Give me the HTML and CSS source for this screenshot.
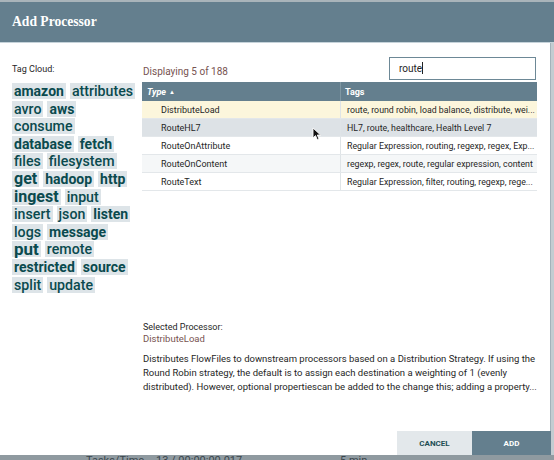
FILE: index.html
```html
<!DOCTYPE html>
<html>
<head>
<meta charset="utf-8">
<link rel="stylesheet" href="styles.css">
</head>
<body>
<div class="top-strip"></div>
<div class="dialog">
  <div class="dialog-header">Add Processor</div>
  <div class="dialog-body">
    <div class="tag-panel">
      <div class="tag-label">Tag Cloud:</div>
      <div class="tag-cloud">
        <div class="tag-row"><span class="tag s14">amazon</span><span class="tag s13">attributes</span></div>
        <div class="tag-row"><span class="tag s13">avro</span><span class="tag s14">aws</span></div>
        <div class="tag-row"><span class="tag s13">consume</span></div>
        <div class="tag-row"><span class="tag s14">database</span><span class="tag s14">fetch</span></div>
        <div class="tag-row"><span class="tag s13">files</span><span class="tag s13">filesystem</span></div>
        <div class="tag-row"><span class="tag s16">get</span><span class="tag s14">hadoop</span><span class="tag s14">http</span></div>
        <div class="tag-row"><span class="tag s16">ingest</span><span class="tag s13">input</span></div>
        <div class="tag-row"><span class="tag s13">insert</span><span class="tag s13">json</span><span class="tag s14">listen</span></div>
        <div class="tag-row"><span class="tag s13">logs</span><span class="tag s14">message</span></div>
        <div class="tag-row"><span class="tag s17">put</span><span class="tag s13">remote</span></div>
        <div class="tag-row"><span class="tag s14">restricted</span><span class="tag s14">source</span></div>
        <div class="tag-row"><span class="tag s13">split</span><span class="tag s13">update</span></div>
      </div>
    </div>
    <div class="main-panel">
      <div class="toolbar">
        <div class="count">Displaying 5 of 188</div>
        <div class="search">route<span class="caret"></span></div>
      </div>
      <div class="table">
        <div class="row head">
          <div class="cell c-type">Type <span class="sort">&#9650;</span></div>
          <div class="cell c-tags">Tags</div>
        </div>
        <div class="row selected">
          <div class="cell c-type">DistributeLoad</div>
          <div class="cell c-tags">route, round robin, load balance, distribute, wei...</div>
        </div>
        <div class="row hover">
          <div class="cell c-type">RouteHL7</div>
          <div class="cell c-tags">HL7, route, healthcare, Health Level 7</div>
        </div>
        <div class="row">
          <div class="cell c-type">RouteOnAttribute</div>
          <div class="cell c-tags">Regular Expression, routing, regexp, regex, Exp...</div>
        </div>
        <div class="row alt">
          <div class="cell c-type">RouteOnContent</div>
          <div class="cell c-tags">regexp, regex, route, regular expression, content</div>
        </div>
        <div class="row">
          <div class="cell c-type">RouteText</div>
          <div class="cell c-tags">Regular Expression, filter, routing, regexp, rege...</div>
        </div>
        <svg class="cursor" width="10" height="14" viewBox="0 0 10 14"><path d="M1 1 L1 11 L3.5 8.6 L5.3 12.8 L7 12 L5.3 8 L8.6 8 Z" fill="#111" stroke="#fff" stroke-width="0.9"/></svg>
      </div>
      <div class="selected-info">
        <div class="sel-label">Selected Processor:</div>
        <div class="sel-name">DistributeLoad</div>
        <div class="sel-desc">Distributes FlowFiles to downstream processors based on a Distribution Strategy. If using the Round Robin strategy, the default is to assign each destination a weighting of 1 (evenly distributed). However, optional propertiescan be added to the change this; adding a property...</div>
      </div>
    </div>
  </div>
  <div class="dialog-footer">
    <div class="btn cancel">CANCEL</div>
    <div class="btn add">ADD</div>
  </div>
</div>
<div class="canvas-strip">
  <span class="st1">Tasks/Time</span><span class="st2">13 / 00:00:00.017</span><span class="st3">5 min</span>
</div>
</body>
</html>
```
FILE: styles.css
```css
html, body {
  margin: 0;
  padding: 0;
}
body {
  width: 554px;
  height: 460px;
  overflow: hidden;
  background: #c3ccd1;
  font-family: Roboto, "Liberation Sans", sans-serif;
}
.top-strip {
  height: 2px;
  background: #a9b4ba;
}
.dialog {
  width: 554px;
  display: flex;
  flex-direction: column;
}
.dialog-header {
  height: 40px;
  background: #647f8e;
  color: #fff;
  font-family: "Liberation Serif", serif;
  font-weight: bold;
  font-size: 13.6px;
  line-height: 40px;
  padding-left: 12px;
  border-bottom: 1px solid #c6d3da;
}
.dialog-body {
  width: 550px;
  height: 388px;
  background: #fff;
  border-right: 1px solid #a3b2ba;
  display: flex;
}
.tag-panel {
  width: 128px;
  padding: 20px 0 0 12px;
}
.tag-label {
  font-size: 9px;
  color: #262626;
  line-height: 12px;
}
.tag-cloud {
  margin-top: 8px;
  display: flex;
  flex-direction: column;
  row-gap: 1.6px;
}
.tag-row {
  display: flex;
  column-gap: 4px;
}
.tag {
  background: #dde4e8;
  color: #0a4a4e;
  font-weight: bold;
  height: 16px;
  line-height: 16px;
  padding: 0 2px;
  display: flex;
  align-items: center;
  white-space: nowrap;
}
.s13 { font-size: 14.2px; font-weight: 500; }
.s14 { font-size: 14px; }
.s16 { font-size: 16px; }
.s17 { font-size: 17px; }
.main-panel {
  width: 395px;
  margin-left: 2px;
  display: flex;
  flex-direction: column;
}
.toolbar {
  display: flex;
  justify-content: space-between;
  align-items: flex-end;
  padding-top: 14px;
}
.count {
  font-size: 10px;
  color: #775351;
  padding-left: 1px;
  padding-bottom: 3px;
}
.search {
  width: 136px;
  height: 21px;
  border: 1px solid #6d8896;
  font-size: 10px;
  line-height: 21px;
  padding-left: 9px;
  color: #262626;
  margin-right: 1px;
}
.caret {
  display: inline-block;
  width: 1px;
  height: 12px;
  background: #222;
  vertical-align: -2px;
}
.table {
  margin-top: 2px;
  position: relative;
}
.row {
  display: flex;
  height: 18px;
  border-bottom: 1px solid #e3e7ea;
  box-sizing: border-box;
  font-size: 9px;
  color: #262626;
}
.row.head {
  height: 19px;
  background: #647f8e;
  color: #fff;
  font-weight: bold;
  border-bottom: none;
}
.row.head .c-type {
  font-style: italic;
  padding-left: 5px;
}
.row.head .c-tags {
  padding-left: 4px;
}
.sort {
  font-size: 6px;
  font-style: normal;
  vertical-align: 1px;
  margin-left: 3px;
}
.row.selected { background: #fcf6dc; }
.row.hover { background: #dde2e6; }
.row.alt { background: #f5f7f8; }
.cell {
  display: flex;
  align-items: center;
  white-space: nowrap;
}
.c-type {
  width: 199px;
  padding-left: 19px;
  box-sizing: border-box;
  border-right: 1px solid #dfe4e7;
}
.row.head .c-type { border-right-color: #7f97a3; }
.c-tags {
  flex: 1;
  min-width: 0;
  padding-left: 6px;
  font-size: 8.8px;
}
.row.head .c-tags { font-size: 9px; }
.cursor {
  position: absolute;
  left: 170px;
  top: 45px;
}
.selected-info {
  margin-top: 130px;
  padding-left: 1px;
}
.sel-label {
  font-size: 9px;
  color: #262626;
  line-height: 12px;
}
.sel-name {
  font-size: 9.5px;
  color: #775351;
  line-height: 12px;
}
.sel-desc {
  margin-top: 7px;
  font-size: 9.5px;
  color: #262626;
  line-height: 14px;
  width: 396px;
}
.dialog-footer {
  width: 551px;
  height: 24px;
  background: #fff;
  display: flex;
  justify-content: flex-end;
}
.btn {
  font-size: 8px;
  font-weight: bold;
  display: flex;
  align-items: center;
  justify-content: center;
}
.cancel {
  width: 75px;
  background: #e3e8eb;
  color: #1e4f55;
}
.add {
  width: 79px;
  background: #647f8e;
  color: #fff;
}
.canvas-strip {
  height: 5px;
  background: #8f9aa0;
  position: relative;
  overflow: hidden;
  font-size: 11px;
  color: #3b464c;
  line-height: 14px;
}
.canvas-strip span {
  position: absolute;
  top: -1px;
}
.st1 { left: 86px; }
.st2 { left: 156px; }
.st3 { left: 340px; }
```
